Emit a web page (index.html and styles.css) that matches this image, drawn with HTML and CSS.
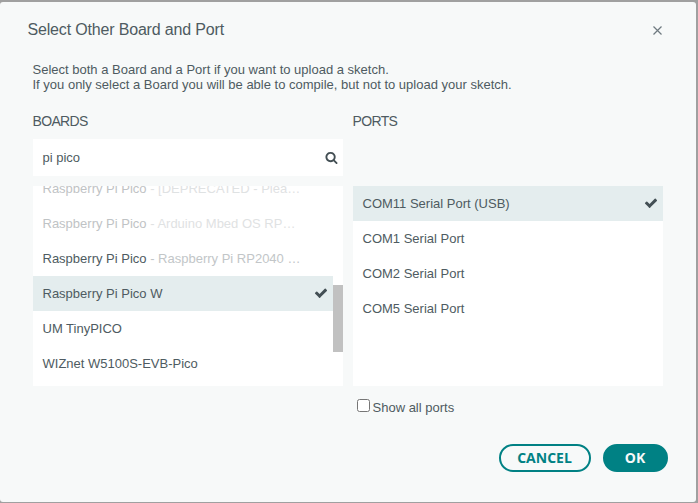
FILE: index.html
```html
<!DOCTYPE html>
<html lang="en">
<head>
<meta charset="utf-8">
<title>Select Other Board and Port</title>
<link rel="stylesheet" href="styles.css">
</head>
<body>
<svg class="defs" width="0" height="0">
  <symbol id="check" viewBox="0 0 1792 1792"><path d="M1671 566q0 40-28 68l-724 724-136 136q-28 28-68 28t-68-28l-136-136-362-362q-28-28-28-68t28-68l136-136q28-28 68-28t68 28l294 295 656-657q28-28 68-28t68 28l136 136q28 28 28 68z"/></symbol>
  <symbol id="search" viewBox="0 0 1792 1792"><path d="M1216 832q0-185-131.5-316.5t-316.5-131.5-316.5 131.5-131.5 316.5 131.5 316.5 316.5 131.5 316.5-131.5 131.5-316.5zm512 832q0 52-38 90t-90 38q-54 0-90-38l-343-342q-179 124-399 124-143 0-273.5-55.5t-225-150-150-225-55.5-273.5 55.5-273.5 150-225 225-150 273.5-55.5 273.5 55.5 225 150 150 225 55.5 273.5q0 220-124 399l343 343q37 37 37 90z"/></symbol>
</svg>
<div class="dialog">
  <header class="title-bar">
    <h1 class="title">Select Other Board and Port</h1>
    <svg class="close" viewBox="0 0 9 9"><path d="M.5 .5l8 8M8.5 .5l-8 8"/></svg>
  </header>
  <main class="content">
    <p class="intro">Select both a Board and a Port if you want to upload a sketch.<br>If you only select a Board you will be able to compile, but not to upload your sketch.</p>
    <div class="columns">
      <section class="column">
        <h2 class="heading">BOARDS</h2>
        <div class="search"><span class="query">pi pico</span><svg class="icon"><use href="#search"/></svg></div>
        <div class="list boards">
          <div class="row faded first"><span>Raspberry Pi Pico</span><span class="detail">&nbsp;- [DEPRECATED - Plea…</span></div>
          <div class="row faded"><span>Raspberry Pi Pico</span><span class="detail">&nbsp;- Arduino Mbed OS RP…</span></div>
          <div class="row"><span>Raspberry Pi Pico</span><span class="detail">&nbsp;- Raspberry Pi RP2040 …</span></div>
          <div class="row selected"><span>Raspberry Pi Pico W</span><svg class="icon"><use href="#check"/></svg></div>
          <div class="row"><span>UM TinyPICO</span></div>
          <div class="row"><span>WIZnet W5100S-EVB-Pico</span></div>
          <div class="thumb"></div>
        </div>
      </section>
      <section class="column">
        <h2 class="heading">PORTS</h2>
        <div class="search-space"></div>
        <div class="list ports">
          <div class="row selected"><span>COM11 Serial Port (USB)</span><svg class="icon"><use href="#check"/></svg></div>
          <div class="row"><span>COM1 Serial Port</span></div>
          <div class="row"><span>COM2 Serial Port</span></div>
          <div class="row"><span>COM5 Serial Port</span></div>
        </div>
        <label class="show-all"><input type="checkbox"><span>Show all ports</span></label>
      </section>
    </div>
  </main>
  <footer class="actions">
    <button class="button cancel">CANCEL</button>
    <button class="button ok">OK</button>
  </footer>
</div>
</body>
</html>
```
FILE: styles.css
```css
* { box-sizing: border-box; }
body {
  margin: 0;
  height: 503px;
  padding: 2px 2px 1px 0;
  overflow: hidden;
  background: #a0a0a0;
  color: #4e5b61;
  font: 13px/15px "Liberation Sans", Arial, sans-serif;
}
.defs { position: absolute; }
.dialog {
  display: flex;
  flex-direction: column;
  height: 500px;
  border-radius: 3px;
  background: #f7f9f9;
}
.title-bar {
  display: flex;
  justify-content: space-between;
  align-items: center;
  height: 56px;
  padding: 0 34px 0 27.5px;
}
.title { margin: 0; font-size: 16px; font-weight: 400; line-height: 20px; letter-spacing: -0.17px; }
.close { width: 9px; height: 9px; fill: none; stroke: #6f7a80; stroke-width: 1.2; }
.content { padding: 4px 33px 0; }
.intro { margin: 0 0 0 -0.5px; white-space: nowrap; }
.columns { display: flex; gap: 10px; margin-top: 21px; }
.column { width: 310px; }
.heading { margin: 0 0 0 -0.5px; font-size: 14px; font-weight: 400; line-height: 16px; letter-spacing: -0.65px; }
.search, .search-space { height: 37px; margin-top: 10px; }
.search {
  display: flex;
  align-items: center;
  justify-content: space-between;
  padding: 0 5px 0 9.5px;
  background: #fff;
}
.icon { width: 13px; height: 13px; fill: #434f54; }
.list { position: relative; height: 200px; margin-top: 10px; overflow: hidden; background: #fff; }
.row {
  display: flex;
  align-items: center;
  height: 35px;
  padding: 0 5px 0 9.5px;
  white-space: nowrap;
}
.row .icon { width: 14px; height: 14px; margin: 0 0 1px auto; }
.boards .row { width: 300px; }
.first { margin-top: -15px; }
.selected { background: #e4edee; }
.detail { color: #c2c6c8; }
.faded { color: #bfc3c5; }
.faded .detail { color: #dfe2e3; }
.thumb { position: absolute; right: 0; top: 99px; width: 10px; height: 67px; background: #c1c1c1; }
.show-all { display: flex; align-items: flex-end; height: 15px; margin: 14px 0 0 4px; }
.show-all input { width: 13px; height: 13px; margin: 0 2.5px 3px 0; }
.actions { display: flex; justify-content: flex-end; gap: 12px; margin-top: 29px; padding-right: 28px; }
.button {
  height: 28px;
  padding: 0 1px 0 0;
  border: 2px solid #008184;
  border-radius: 14px;
  font: 700 14px/20px "Open Sans", sans-serif;
}
.cancel { width: 92px; background: transparent; color: #008184; }
.ok { width: 65px; background: #008184; color: #f7f9f9; }
```
